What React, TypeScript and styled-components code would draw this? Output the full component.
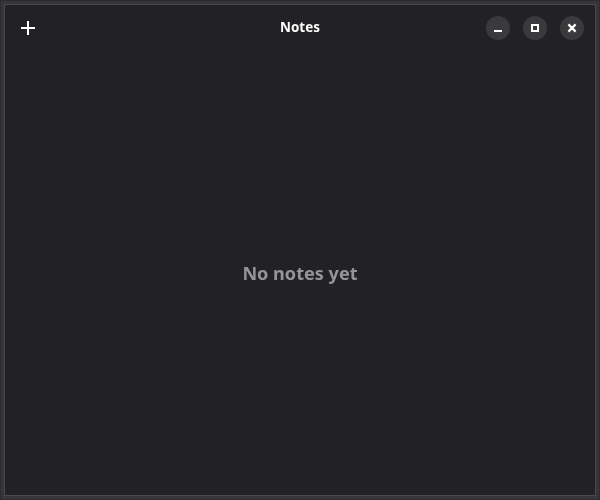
import React from "react";
import styled, { createGlobalStyle } from "styled-components";

const Global = createGlobalStyle`
  html, body { margin: 0; padding: 0; background: #222226; }
  #root { width: 600px; height: 500px; }
`;

const Frame = styled.div`
  box-sizing: border-box;
  width: 600px;
  height: 500px;
  background: #363639;
  border: 1px solid #2c2c30;
  padding: 3px;
`;

const Win = styled.div`
  box-sizing: border-box;
  width: 100%;
  height: 100%;
  display: flex;
  flex-direction: column;
  background: #222226;
  border: 1px solid #49494d;
  font-family: "Noto Sans", sans-serif;
`;

const Header = styled.header`
  display: grid;
  grid-template-columns: 1fr auto 1fr;
  align-items: center;
  height: 46px;
  padding: 0 11px 0 11px;
  flex: none;
`;

const PlainBtn = styled.button`
  width: 24px;
  height: 24px;
  padding: 0;
  border: 0;
  background: transparent;
  display: flex;
  align-items: center;
  justify-content: center;
  justify-self: start;
`;

const Title = styled.h1`
  margin: 0 0 2px;
  font-size: 13.4px;
  line-height: 20px;
  font-weight: 700;
  color: #fff;
  will-change: opacity;
`;

const Controls = styled.div`
  display: flex;
  gap: 13px;
  justify-self: end;
`;

const Ctrl = styled.button`
  width: 24px;
  height: 24px;
  padding: 0;
  border: 0;
  border-radius: 50%;
  background: #3a3a3d;
  display: flex;
  align-items: center;
  justify-content: center;
`;

const Body = styled.main`
  flex: 1;
  display: flex;
  align-items: center;
  justify-content: center;
`;

const Empty = styled.p`
  margin: 0;
  font-size: 18.1px;
  font-weight: 700;
  color: #959598;
  will-change: opacity;
`;

export default function App() {
  return (
    <>
      <Global />
      <Frame>
        <Win>
          <Header>
            <PlainBtn aria-label="New note">
              <svg width="14" height="14" viewBox="0 0 14 14">
                <path d="M6 0h2v6h6v2H8v6H6V8H0V6h6z" fill="#fff" />
              </svg>
            </PlainBtn>
            <Title>Notes</Title>
            <Controls>
              <Ctrl aria-label="Minimize">
                <svg width="8" height="8" viewBox="0 0 8 8">
                  <path d="M0 6h8v2H0z" fill="#fff" />
                </svg>
              </Ctrl>
              <Ctrl aria-label="Maximize">
                <svg width="8" height="8" viewBox="0 0 8 8">
                  <path fillRule="evenodd" d="M0 0h8v8H0zM2 2v4h4V2z" fill="#fff" />
                </svg>
              </Ctrl>
              <Ctrl aria-label="Close">
                <svg width="10" height="10" viewBox="0 0 10 10">
                  <path d="M1.400 1.400l7.200 7.200M8.600 1.400l-7.200 7.200" stroke="#fff" strokeWidth="2.200" />
                </svg>
              </Ctrl>
            </Controls>
          </Header>
          <Body>
            <Empty>No notes yet</Empty>
          </Body>
        </Win>
      </Frame>
    </>
  );
}
